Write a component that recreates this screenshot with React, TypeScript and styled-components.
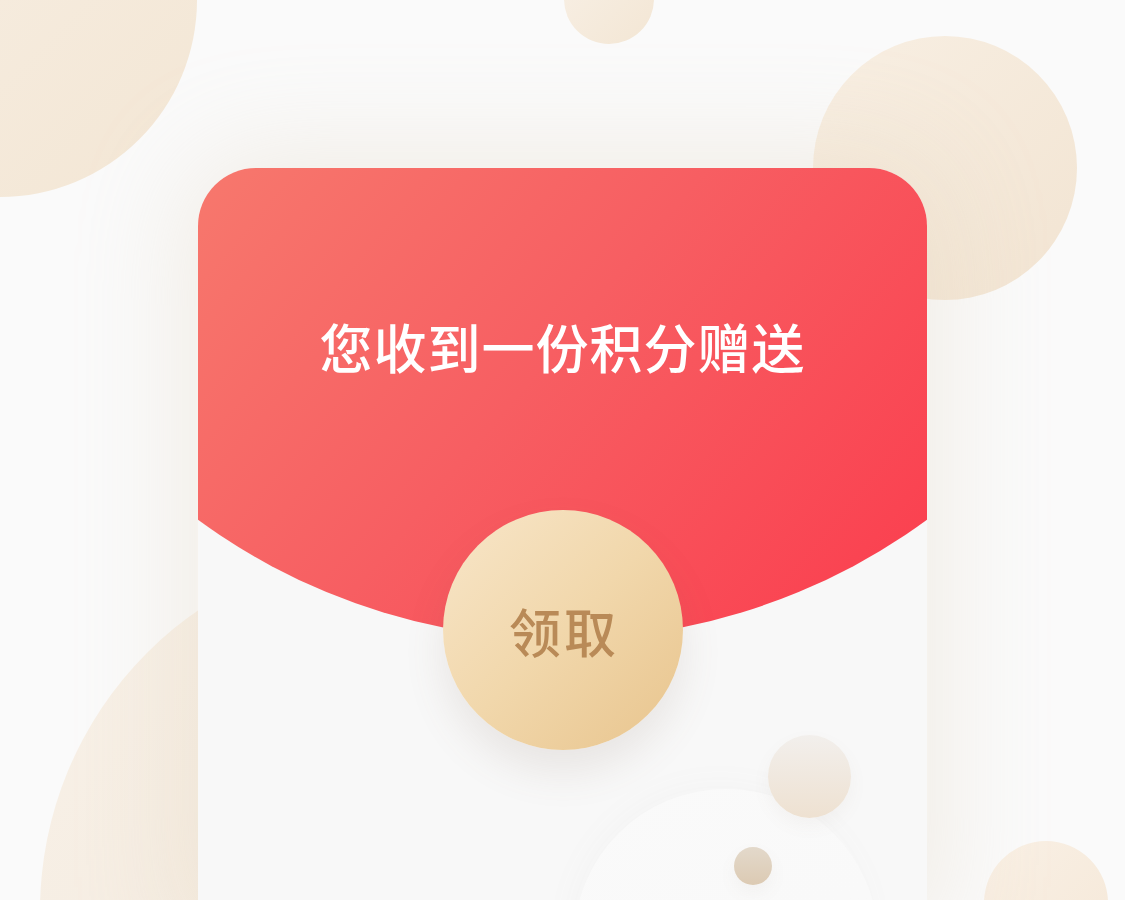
import React from "react";
import styled, { createGlobalStyle } from "styled-components";

const GlobalStyle = createGlobalStyle`
  html, body {
    margin: 0;
    padding: 0;
    background: #fafafa;
    font-family: "Noto Sans CJK SC", "Noto Sans", sans-serif;
  }
`;

const Page = styled.div`
  position: relative;
  width: 1125px;
  height: 900px;
  overflow: hidden;
  background: #fafafa;
  display: flex;
  justify-content: center;
  padding-top: 168px;
  box-sizing: border-box;
`;

const Bubble = styled.div<{ $x: number; $y: number; $size: number; $from: string; $to: string }>`
  position: absolute;
  left: ${(p) => p.$x - p.$size / 2}px;
  top: ${(p) => p.$y - p.$size / 2}px;
  width: ${(p) => p.$size}px;
  height: ${(p) => p.$size}px;
  border-radius: 50%;
  background: linear-gradient(135deg, ${(p) => p.$from}, ${(p) => p.$to});
`;

const Card = styled.div`
  position: relative;
  z-index: 1;
  width: 729px;
  height: 760px;
  flex-shrink: 0;
  border-radius: 58px 58px 0 0;
  background: #f8f8f8;
  overflow: hidden;
  box-shadow: 0 0 110px 10px rgba(222, 204, 180, 0.3);
  display: flex;
  flex-direction: column;
  align-items: center;
`;

const Cover = styled.div`
  position: absolute;
  top: 0;
  left: 0;
  right: 0;
  height: 480px;
  background: linear-gradient(130deg, #f7786d 0%, #f75e62 45%, #fb3c4d 100%);
  clip-path: circle(617px at 50% -146px);
`;

const Title = styled.h1`
  position: relative;
  margin: 148px 0 0;
  font-family: "Noto Sans CJK SC", "Noto Sans", sans-serif;
  font-weight: 500;
  font-size: 53px;
  line-height: 60px;
  letter-spacing: 1px;
  color: #ffffff;
`;

const OpenButton = styled.button`
  position: relative;
  margin-top: 134px;
  width: 240px;
  height: 240px;
  border: none;
  border-radius: 50%;
  padding: 0 0 0 3px;
  background: linear-gradient(135deg, #f8e6c9 0%, #f1d7ab 50%, #e8c48d 100%);
  box-shadow: 0 22px 40px rgba(120, 100, 80, 0.12);
  display: flex;
  align-items: center;
  justify-content: center;
  font-family: "Noto Sans CJK SC", "Noto Sans", sans-serif;
  font-weight: 500;
  font-size: 52px;
  letter-spacing: 3px;
  color: #b98a57;
  cursor: pointer;
`;

const Glow = styled.div`
  position: absolute;
  left: 376px;
  top: 621px;
  width: 304px;
  height: 304px;
  border-radius: 50%;
  background: linear-gradient(160deg, #fafafa, #f8f8f8);
  box-shadow: -6px -6px 30px rgba(150, 140, 130, 0.035);
`;

const Dot = styled.div<{ $x: number; $y: number; $size: number; $from: string; $to: string }>`
  position: absolute;
  left: ${(p) => p.$x - p.$size / 2}px;
  top: ${(p) => p.$y - p.$size / 2}px;
  width: ${(p) => p.$size}px;
  height: ${(p) => p.$size}px;
  border-radius: 50%;
  background: linear-gradient(180deg, ${(p) => p.$from}, ${(p) => p.$to});
  box-shadow: 0 8px 18px rgba(140, 120, 100, 0.06);
`;

export default function App() {
  return (
    <>
      <GlobalStyle />
      <Page>
        <Bubble $x={0} $y={0} $size={394} $from="#f8f0e6" $to="#f3e6d4" />
        <Bubble $x={609} $y={-1} $size={90} $from="#f8f0e6" $to="#f3e6d4" />
        <Bubble $x={945} $y={168} $size={264} $from="#f8efe3" $to="#f2e4d2" />
        <Bubble $x={405} $y={911} $size={730} $from="#f8f1e8" $to="#f1e6d8" />
        <Bubble $x={1046} $y={903} $size={124} $from="#f9f0e5" $to="#f5e8d8" />
        <Card>
          <Cover />
          <Glow />
          <Dot $x={611} $y={608} $size={83} $from="#f2efec" $to="#eee1d1" />
          <Dot $x={555} $y={698} $size={38} $from="#e3d9cb" $to="#dccab3" />
          <Title>您收到一份积分赠送</Title>
          <OpenButton>领取</OpenButton>
        </Card>
      </Page>
    </>
  );
}
